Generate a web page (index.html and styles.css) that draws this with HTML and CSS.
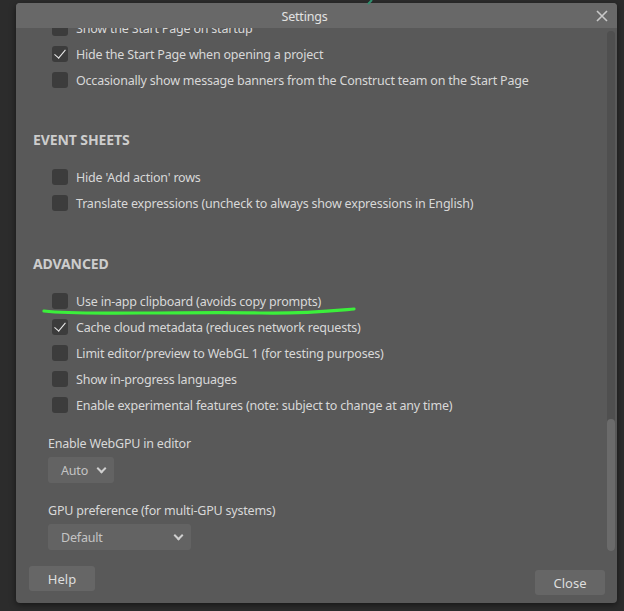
FILE: index.html
```html
<!DOCTYPE html>
<html lang="en">
<head>
    <meta charset="UTF-8">
    <title>Settings</title>
    <link rel="stylesheet" href="styles.css">
</head>
<body>

<div class="dialog">
    <!-- title bar -->
    <div class="titlebar">
        <span class="title">Settings</span>
        <button class="close-x" aria-label="Close">
            <svg width="12" height="12" viewBox="0 0 12 12"><path d="M1 1 L11 11 M11 1 L1 11" stroke="#c8c8c8" stroke-width="1.6"/></svg>
        </button>
    </div>

    <!-- scrolled settings list -->
    <div class="dialog-body">
        <div class="scroller">
            <div class="options first">
                <label class="option"><span class="box"></span>Show the Start Page on startup</label>
                <label class="option"><span class="box checked"></span>Hide the Start Page when opening a project</label>
                <label class="option"><span class="box"></span>Occasionally show message banners from the Construct team on the Start Page</label>
            </div>

            <h2 class="section-title">EVENT SHEETS</h2>
            <div class="options">
                <label class="option"><span class="box"></span>Hide 'Add action' rows</label>
                <label class="option"><span class="box"></span>Translate expressions (uncheck to always show expressions in English)</label>
            </div>

            <h2 class="section-title section-advanced">ADVANCED</h2>
            <div class="options">
                <label class="option"><span class="box"></span>Use in-app clipboard (avoids copy prompts)</label>
                <label class="option"><span class="box checked"></span>Cache cloud metadata (reduces network requests)</label>
                <label class="option"><span class="box"></span>Limit editor/preview to WebGL 1 (for testing purposes)</label>
                <label class="option"><span class="box"></span>Show in-progress languages</label>
                <label class="option"><span class="box"></span>Enable experimental features (note: subject to change at any time)</label>
            </div>

            <div class="field field-first">
                <div class="field-label">Enable WebGPU in editor</div>
                <div class="select select-auto"><span>Auto</span><span class="chev"></span></div>
            </div>
            <div class="field">
                <div class="field-label">GPU preference (for multi-GPU systems)</div>
                <div class="select select-default"><span>Default</span><span class="chev"></span></div>
            </div>
        </div>

        <div class="scrollbar"><div class="thumb"></div></div>
    </div>

    <!-- footer buttons -->
    <div class="footer">
        <button class="btn btn-help">Help</button>
        <button class="btn btn-close">Close</button>
    </div>
</div>

<!-- green marker annotation drawn on the screenshot -->
<svg class="scribble" width="624" height="611" viewBox="0 0 624 611">
    <path d="M44 311 C 70 314, 100 313, 140 313 S 220 312, 260 313 S 330 311, 354 309" fill="none" stroke="#3bef3b" stroke-width="3.2" stroke-linecap="round"/>
    <path d="M368 4 L372 0" stroke="#2f8f6f" stroke-width="2"/>
</svg>

</body>
</html>
```

FILE: styles.css
```css
body {
    margin: 0;
    width: 624px;
    height: 611px;
    background-color: #2c2c2c;
    font-family: "Noto Sans", "Open Sans", sans-serif;
    font-size: 12.5px;
    letter-spacing: -0.2px;
    color: #d8d8d8;
    overflow: hidden;
    position: relative;
}

.dialog {
    margin: 3px 0 0 16px;
    width: 601px;
    height: 600px;
    background-color: #595959;
    border-radius: 4px;
    display: flex;
    flex-direction: column;
    overflow: hidden;
    box-shadow: 0 2px 6px rgba(0, 0, 0, .5);
}

.titlebar {
    height: 25px;
    flex: none;
    background-color: #686868;
    display: flex;
    align-items: center;
    justify-content: center;
    padding: 1px 24px 0 0;
    box-sizing: border-box;
    position: relative;
}

.title {
    color: #e2e2e2;
}

.close-x {
    position: absolute;
    right: 8px;
    top: 6px;
    width: 14px;
    height: 14px;
    padding: 0;
    border: none;
    background: none;
    display: flex;
    align-items: center;
    justify-content: center;
}

.dialog-body {
    flex: 1;
    display: flex;
    overflow: hidden;
}

.scroller {
    flex: 1;
    padding-left: 17px;
}

.options.first {
    margin-top: -13px;
}

.options {
    padding-left: 19px;
}

.option {
    display: flex;
    align-items: center;
    height: 26px;
    gap: 8px;
    white-space: nowrap;
}

.box {
    width: 16px;
    height: 16px;
    border-radius: 3px;
    background-color: #3c3c3c;
    flex: none;
    position: relative;
}

.box.checked::after {
    content: "";
    position: absolute;
    left: 5px;
    top: 1px;
    width: 5px;
    height: 10px;
    border: solid #eeeeee;
    border-width: 0 1.5px 1.5px 0;
    transform: rotate(40deg);
}

.section-title {
    margin: 37px 0 14px;
    font-size: 14px;
    line-height: 20px;
    font-weight: 700;
    letter-spacing: -0.1px;
    color: #cdcdcd;
}

.section-title.section-advanced {
    margin-top: 38px;
}

.field {
    padding-left: 15px;
    margin-top: 19px;
}

.field.field-first {
    margin-top: 17px;
}

.field-label {
    line-height: 18px;
    margin-bottom: 4px;
}

.select {
    height: 26px;
    background-color: #636363;
    border-radius: 3px;
    display: flex;
    align-items: center;
    justify-content: space-between;
    padding: 0 9px 0 13px;
    box-sizing: border-box;
    color: #c4c4c4;
}

.select-auto {
    width: 66px;
}

.select-default {
    width: 143px;
}

.chev {
    width: 5px;
    height: 5px;
    border: solid #cfcfcf;
    border-width: 0 2px 2px 0;
    transform: rotate(45deg);
    margin-top: -4px;
}

.scrollbar {
    width: 8px;
    margin: 3px 2px 4px 0;
    background-color: #4f4f4f;
    border-radius: 4px;
    position: relative;
    flex: none;
}

.thumb {
    position: absolute;
    left: 0;
    right: 0;
    bottom: 0;
    height: 132px;
    background-color: #6b6b6b;
    border-radius: 4px;
}

.footer {
    height: 48px;
    flex: none;
    display: flex;
    justify-content: space-between;
    padding: 11px 12px 0 13px;
    box-sizing: border-box;
}

.btn {
    height: 25px;
    border: none;
    border-radius: 3px;
    background-color: #666666;
    color: #dedede;
    font-family: "Noto Sans", "Open Sans", sans-serif;
    font-size: 13px;
    padding: 0;
}

.btn-help {
    width: 66px;
}

.btn-close {
    width: 70px;
    margin-top: 4px;
}

.scribble {
    position: absolute;
    left: 0;
    top: 0;
    pointer-events: none;
}
```
